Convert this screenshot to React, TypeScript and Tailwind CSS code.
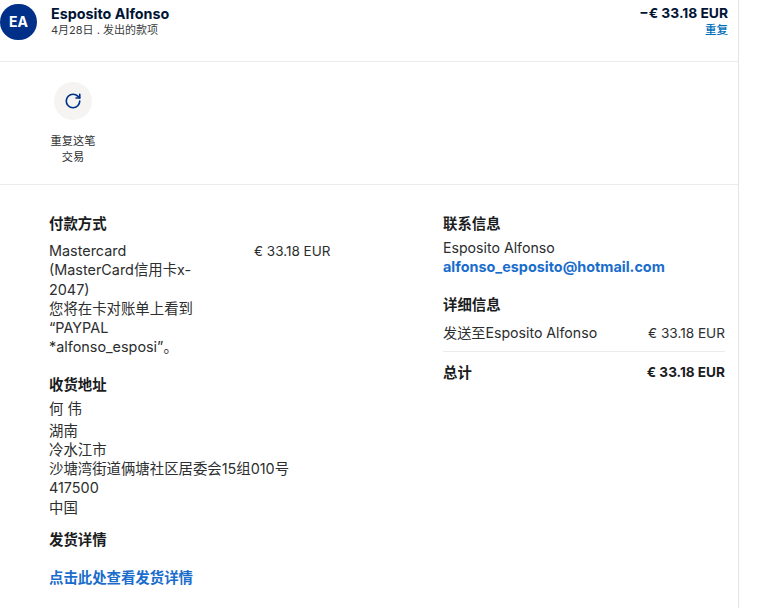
import React from 'react';
import { RotateCw } from 'lucide-react';

const font = "font-['Inter','Noto_Sans_CJK_SC',sans-serif]";

const App: React.FC = () => {
  return (
    <div className={`${font} w-[739px] h-[608px] overflow-hidden border-r border-[#e4e4e4] bg-white text-[14.4px] leading-[19.2px] text-[#2c2e2f]`}>
      {/* Header */}
      <div className="flex h-[62px] justify-between border-b border-[#ebebeb] pr-[10px] pt-[4px]">
        <div className="flex">
          <div className="flex h-[36px] w-[37px] items-center justify-center rounded-full bg-[#003087] text-[14px] font-bold text-white">
            EA
          </div>
          <div className="ml-[14px]">
            <p className="text-[14.35px] font-bold leading-[19px] text-[#001435]">Esposito Alfonso</p>
            <p className="text-[11px] leading-[15px] text-[#3a3d40]">4月28日 . 发出的款项</p>
          </div>
        </div>
        <div className="flex flex-col items-end">
          <p className="text-[13.8px] font-bold leading-[19px] text-[#001435]">−€ 33.18 EUR</p>
          <a className="text-[11.5px] leading-[15px] font-medium text-[#0070ba]">重复</a>
        </div>
      </div>

      {/* Action */}
      <div className="h-[123px] border-b border-[#ebebeb] pl-[46px] pt-[20px]">
        <div className="flex w-[54px] flex-col items-center">
          <div className="flex h-[38px] w-[38px] items-center justify-center rounded-full bg-[#f5f4f2]">
            <RotateCw size={18} strokeWidth={2.2} className="text-[#003087]" />
          </div>
          <p className="mt-[13px] whitespace-nowrap text-center text-[11.2px] leading-[16px] text-[#2c2e2f]">重复这笔<br />交易</p>
        </div>
      </div>

      {/* Details */}
      <div className="flex pl-[49px] pr-[13px] pt-[29px]">
        <div className="w-[394px]">
          <h3 className="font-bold text-[#1a1c1e]">付款方式</h3>
          <div className="mt-[8px] flex">
            <div className="w-[205px]">
              <p className="w-[148px]">Mastercard (MasterCard信用卡x-2047)</p>
              <p className="w-[148px]">您将在卡对账单上看到 “PAYPAL *alfonso_esposi”。</p>
            </div>
            <p className="mt-[1px] whitespace-nowrap text-[13.5px]">€ 33.18 EUR</p>
          </div>

          <h3 className="mt-[19px] font-bold text-[#1a1c1e]">收货地址</h3>
          <p className="mt-[4px]">何 伟</p>
          <div className="mt-[3px]">
            <p>湖南</p>
            <p>冷水江市</p>
            <p>沙塘湾街道俩塘社区居委会15组010号</p>
            <p>417500</p>
            <p>中国</p>
          </div>

          <h3 className="mt-[13px] font-bold text-[#1a1c1e]">发货详情</h3>
          <a className="mt-[19px] block font-bold text-[#1a6dcc]">点击此处查看发货详情</a>
        </div>

        <div className="flex-1">
          <h3 className="font-bold text-[#1a1c1e]">联系信息</h3>
          <p className="mt-[5px] text-[14.15px]">Esposito Alfonso</p>
          <a className="block font-bold text-[#1a6dcc]">alfonso_esposito@hotmail.com</a>

          <h3 className="mt-[18px] font-bold text-[#1a1c1e]">详细信息</h3>
          <div className="mt-[9px] flex justify-between border-b border-[#ebebeb] pb-[8px]">
            <p className="text-[14.15px]">发送至Esposito Alfonso</p>
            <p className="mt-[1px] text-[13.6px]">€ 33.18 EUR</p>
          </div>
          <div className="mt-[11px] flex justify-between font-bold text-[#1a1c1e]">
            <p>总计</p>
            <p className="text-[13.6px]">€ 33.18 EUR</p>
          </div>
        </div>
      </div>
    </div>
  );
};

export default App;
